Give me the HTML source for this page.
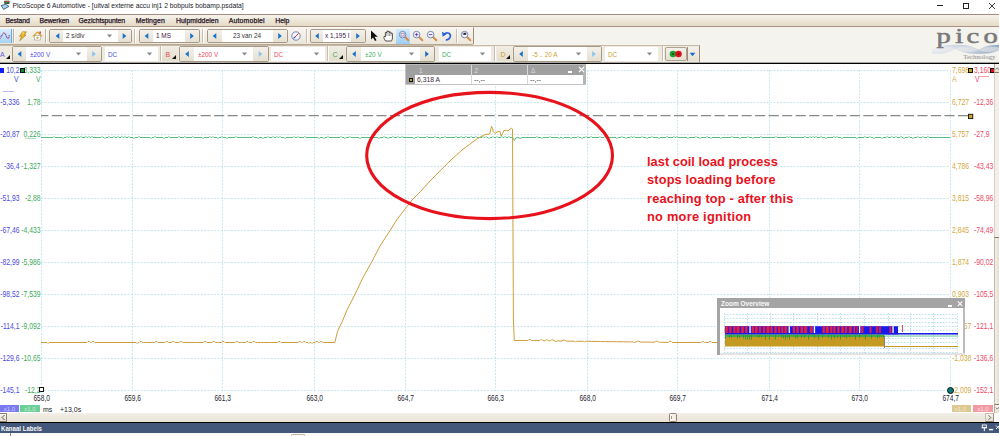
<!DOCTYPE html><html><head><meta charset="utf-8"><style>
html,body{margin:0;padding:0;}
body{width:999px;height:436px;overflow:hidden;position:relative;background:#f5f3ee;font-family:"Liberation Sans",sans-serif;}
.t{position:absolute;white-space:nowrap;line-height:1;font-family:"Liberation Sans",sans-serif;}
</style></head><body>
<div style="position:absolute;left:0px;top:0px;width:999px;height:14px;background:#fff"></div>
<svg style="position:absolute;left:0;top:0" width="12" height="12" viewBox="0 0 12 12">
<path d="M1.2 5.6 L5.8 4.2 L9 6.4 L3.6 9.4 Z" fill="#a6d2f4" stroke="#1a3458" stroke-width="0.7"/>
<rect x="4.4" y="0.8" width="5" height="3" fill="#1a1a1a"/><rect x="4.6" y="0.9" width="4.6" height="1.2" fill="#d83838"/><path d="M5 3.4 L6 2 L6.8 3.2 L7.6 1.2 L8.6 3.4" stroke="#20c040" stroke-width="0.7" fill="none"/><rect x="6.3" y="3.8" width="0.8" height="1" fill="#50c080"/>
</svg>
<div class="t" style="left:12.6px;top:2.59px;font-size:6.75px;color:#1a1a2a;font-weight:normal;">PicoScope 6 Automotive - [uitval externe accu inj1 2 bobpuls bobamp.psdata]</div>
<div style="position:absolute;left:937px;top:5px;width:6px;height:1px;background:#222"></div>
<div style="position:absolute;left:963px;top:3px;width:5px;height:5px;border:1px solid #222;box-sizing:border-box;width:6px;height:6px"></div>
<svg style="position:absolute;left:988px;top:2px" width="8" height="8" viewBox="0 0 8 8"><path d="M1 1L7 7M7 1L1 7" stroke="#222" stroke-width="0.9"/></svg>
<div style="position:absolute;left:0px;top:14px;width:999px;height:13px;background:linear-gradient(#f6f3ec 0%,#efe9dc 40%,#e5dac6 100%);border-top:1px solid #a48c80;border-bottom:1px solid #aa9484;box-sizing:border-box"></div>
<div class="t" style="left:5.4px;top:17.56px;font-size:6.9px;color:#1a0a1a;font-weight:normal;letter-spacing:-0.15px;-webkit-text-stroke:0.25px #2a1a2a;">Bestand</div>
<div class="t" style="left:39.6px;top:17.56px;font-size:6.9px;color:#1a0a1a;font-weight:normal;letter-spacing:-0.15px;-webkit-text-stroke:0.25px #2a1a2a;">Bewerken</div>
<div class="t" style="left:78.6px;top:17.56px;font-size:6.9px;color:#1a0a1a;font-weight:normal;letter-spacing:-0.1px;-webkit-text-stroke:0.25px #2a1a2a;">Gezichtspunten</div>
<div class="t" style="left:135.7px;top:17.56px;font-size:6.9px;color:#1a0a1a;font-weight:normal;letter-spacing:0.1px;-webkit-text-stroke:0.25px #2a1a2a;">Metingen</div>
<div class="t" style="left:175.9px;top:17.56px;font-size:6.9px;color:#1a0a1a;font-weight:normal;letter-spacing:0.05px;-webkit-text-stroke:0.25px #2a1a2a;">Hulpmiddelen</div>
<div class="t" style="left:228.8px;top:17.56px;font-size:6.9px;color:#1a0a1a;font-weight:normal;letter-spacing:0.15px;-webkit-text-stroke:0.25px #2a1a2a;">Automobiel</div>
<div class="t" style="left:275.2px;top:17.56px;font-size:6.9px;color:#1a0a1a;font-weight:normal;letter-spacing:0px;-webkit-text-stroke:0.25px #2a1a2a;">Help</div>
<div style="position:absolute;left:0px;top:27px;width:999px;height:36px;background:#f5f3ee"></div>
<div style="position:absolute;left:0px;top:27px;width:474px;height:18px;background:linear-gradient(#f7f5ef,#ebe6da);border-top:1px solid #faf8f3;border-bottom:1px solid #b8a894;border-right:1px solid #9c8c7c;box-sizing:border-box;border-bottom-right-radius:2px"></div>
<div style="position:absolute;left:0px;top:29px;width:12px;height:14px;background:linear-gradient(#dcefff,#a6d2f6);border-right:1px solid #62a8ea;box-sizing:border-box"></div>
<svg style="position:absolute;left:0;top:29px" width="12" height="14" viewBox="0 0 12 14"><path d="M0 9.5 C1.5 9.5,2.5 3.5,4 3.5 S6.5 9.5,8 9.5 S9 6,9.5 6" stroke="#e0303a" stroke-width="1" fill="none" stroke-dasharray="1 0.6"/><path d="M0 7.5 C1.5 7.5,2.7 4,4.5 4.5 S6.5 9.5,8 9 S8.8 7,9 6.5" stroke="#3a60e0" stroke-width="0.9" fill="none" stroke-dasharray="1 0.7"/></svg>
<div style="position:absolute;left:13px;top:29px;width:1px;height:14px;background:#bdb2a2"></div>
<div style="position:absolute;left:14px;top:29px;width:1px;height:14px;background:#fbfaf6"></div>
<svg style="position:absolute;left:18px;top:31px" width="10" height="11" viewBox="0 0 10 11"><path d="M4.5 0.8 L8.5 0.8 L6.2 4 L8 4 L1.8 9.8 L3.6 5.4 L1.5 5.4Z" fill="#e8b828" stroke="#9a6a08" stroke-width="0.5"/><path d="M4.2 2 L6 2" stroke="#fff6c0" stroke-width="0.8"/></svg>
<svg style="position:absolute;left:32px;top:31px" width="11" height="10" viewBox="0 0 11 10"><rect x="2.5" y="4.5" width="6" height="4.5" fill="#fff" stroke="#8a8a7a" stroke-width="0.5"/><path d="M0.8 5.4 L5.5 1 L10.2 5.4" stroke="#d8a020" stroke-width="1.2" fill="none"/><circle cx="5.5" cy="6.8" r="1.1" fill="#d8a020"/><rect x="7.5" y="0.5" width="1.2" height="2.2" fill="#b01818"/></svg>
<div style="position:absolute;left:45px;top:29px;width:1px;height:14px;background:#bdb2a2"></div>
<div style="position:absolute;left:46px;top:29px;width:1px;height:14px;background:#fbfaf6"></div>
<div style="position:absolute;left:49px;top:29px;width:83px;height:14px;border:1px solid #a89886;border-radius:2px;box-sizing:border-box;background:#ece7dc"></div>
<div style="position:absolute;left:50px;top:30px;width:13px;height:12px;background:linear-gradient(#f4f1ea,#e6e0d2);"></div>
<div style="position:absolute;left:63px;top:30px;width:55px;height:12px;background:#fff"></div>
<div class="t" style="left:66px;top:33.08px;font-size:6.4px;color:#333;font-weight:normal;transform:scaleY(1.2);transform-origin:50% 84.65%;">2 s/div</div>
<div style="position:absolute;left:118px;top:30px;width:13px;height:12px;background:linear-gradient(#f4f1ea,#e6e0d2);"></div>
<div style="position:absolute;left:134px;top:29px;width:1px;height:14px;background:#c9bdae"></div>
<div style="position:absolute;left:135px;top:29px;width:1px;height:14px;background:#fff"></div>
<div style="position:absolute;left:139px;top:29px;width:61px;height:14px;border:1px solid #a89886;border-radius:2px;box-sizing:border-box;background:#ece7dc"></div>
<div style="position:absolute;left:140px;top:30px;width:13px;height:12px;background:linear-gradient(#f4f1ea,#e6e0d2);"></div>
<div style="position:absolute;left:153px;top:30px;width:32px;height:12px;background:#fff"></div>
<div class="t" style="left:156px;top:33.08px;font-size:6.4px;color:#3a1a4a;font-weight:normal;transform:scaleY(1.2);transform-origin:50% 84.65%;">1 MS</div>
<div style="position:absolute;left:185px;top:30px;width:14px;height:12px;background:linear-gradient(#f4f1ea,#e6e0d2);"></div>
<div style="position:absolute;left:202px;top:29px;width:1px;height:14px;background:#c9bdae"></div>
<div style="position:absolute;left:203px;top:29px;width:1px;height:14px;background:#fff"></div>
<div style="position:absolute;left:207px;top:29px;width:81px;height:14px;border:1px solid #a89886;border-radius:2px;box-sizing:border-box;background:#ece7dc"></div>
<div style="position:absolute;left:208px;top:30px;width:14px;height:12px;background:linear-gradient(#f4f1ea,#e6e0d2);"></div>
<div style="position:absolute;left:222px;top:30px;width:51px;height:12px;background:#fff"></div>
<div class="t" style="right:738px;top:33.08px;font-size:6.4px;color:#333;font-weight:normal;transform:scaleY(1.2);transform-origin:50% 84.65%;">23 van 24</div>
<div style="position:absolute;left:273px;top:30px;width:14px;height:12px;background:linear-gradient(#f4f1ea,#e6e0d2);"></div>
<svg style="position:absolute;left:290px;top:29px" width="14" height="14" viewBox="0 0 14 14"><circle cx="6" cy="7" r="4.2" fill="#f4f6fa" stroke="#6a7aa8" stroke-width="0.9"/><path d="M3.8 9.2 L6.6 6.4 L8.4 4.6 L5.4 7.6Z" fill="#e03030" stroke="#e03030" stroke-width="0.9"/><path d="M3.6 9.4 L5.4 7.6" stroke="#4a60c8" stroke-width="1.1"/></svg>
<div style="position:absolute;left:306px;top:29px;width:1px;height:14px;background:#c9bdae"></div>
<div style="position:absolute;left:307px;top:29px;width:1px;height:14px;background:#fff"></div>
<div style="position:absolute;left:310px;top:29px;width:56px;height:14px;border:1px solid #a89886;border-radius:2px;box-sizing:border-box;background:#ece7dc"></div>
<div style="position:absolute;left:311px;top:30px;width:12px;height:12px;background:linear-gradient(#f4f1ea,#e6e0d2);"></div>
<div style="position:absolute;left:323px;top:30px;width:28px;height:12px;background:#fff"></div>
<div class="t" style="left:325px;top:33.08px;font-size:6.4px;color:#3a1a4a;font-weight:normal;transform:scaleY(1.2);transform-origin:50% 84.65%;">x 1,195 I</div>
<div style="position:absolute;left:351px;top:30px;width:14px;height:12px;background:linear-gradient(#f4f1ea,#e6e0d2);"></div>
<svg style="position:absolute;left:370px;top:30px" width="9" height="12" viewBox="0 0 9 12"><path d="M1 0.5 L1 9.5 L3 7.5 L5 11 L6.5 10.2 L4.6 6.8 L7.8 6.8Z" fill="#111"/></svg>
<svg style="position:absolute;left:383px;top:30px" width="11" height="12" viewBox="0 0 11 12"><path d="M2.5 11 C1 9,0.6 7.5,1.2 6.3 L2.4 6.8 L2.4 3 C2.4 2,3.7 2,3.7 3 L3.8 1.8 C3.8 0.8,5.1 0.8,5.1 1.8 L5.2 2 C5.2 1,6.5 1,6.5 2 L6.5 2.6 C6.5 1.7,7.8 1.7,7.8 2.6 L8.2 3.5 C8.3 2.8,9.4 2.8,9.4 3.6 L9.4 8 C9.4 9.6,8.4 11,8.4 11Z" fill="#fff" stroke="#1a1a1a" stroke-width="0.75"/><path d="M3.7 3v3M5.1 2v4M6.5 2.6v3.4M7.9 3v3" stroke="#444" stroke-width="0.45"/></svg>
<div style="position:absolute;left:396px;top:29px;width:14px;height:15px;background:linear-gradient(#d4ebfd,#9ccdf6)"></div>
<svg style="position:absolute;left:398px;top:30px" width="12" height="12" viewBox="0 0 12 12"><path d="M6.8 6.8 L10.3 10.3" stroke="#d88c48" stroke-width="2" stroke-linecap="round"/><circle cx="4.6" cy="4.6" r="3.3" fill="#eef3fb" stroke="#7a8cb0" stroke-width="1"/><rect x="3" y="3.2" width="3.2" height="2.8" fill="none" stroke="#8a70b0" stroke-width="0.7"/></svg>
<svg style="position:absolute;left:412px;top:30px" width="12" height="12" viewBox="0 0 12 12"><path d="M6.8 6.8 L10.3 10.3" stroke="#d88c48" stroke-width="2" stroke-linecap="round"/><circle cx="4.6" cy="4.6" r="3.3" fill="#eef3fb" stroke="#7a8cb0" stroke-width="1"/><path d="M2.9 4.6h3.4M4.6 2.9v3.4" stroke="#6a3ab0" stroke-width="0.9"/></svg>
<svg style="position:absolute;left:426px;top:30px" width="12" height="12" viewBox="0 0 12 12"><path d="M6.8 6.8 L10.3 10.3" stroke="#d88c48" stroke-width="2" stroke-linecap="round"/><circle cx="4.6" cy="4.6" r="3.3" fill="#eef3fb" stroke="#7a8cb0" stroke-width="1"/><path d="M2.9 4.6h3.4" stroke="#6a3ab0" stroke-width="0.9"/></svg>
<svg style="position:absolute;left:441px;top:30px" width="12" height="12" viewBox="0 0 12 12"><path d="M3.2 4.2 C5 2,9.6 2.6,9.4 6 C9.2 8.6,6.8 10,4.8 9.8" stroke="#2a62d8" stroke-width="1.7" fill="none"/><path d="M1 1.8 L1.6 6.8 L5.6 4.2Z" fill="#2a62d8"/></svg>
<div style="position:absolute;left:456px;top:29px;width:1px;height:14px;background:#c9bdae"></div>
<div style="position:absolute;left:457px;top:29px;width:1px;height:14px;background:#fff"></div>
<svg style="position:absolute;left:460px;top:30px" width="12" height="12" viewBox="0 0 12 12"><path d="M6.8 6.8 L10.3 10.3" stroke="#d88c48" stroke-width="2" stroke-linecap="round"/><circle cx="4.6" cy="4.6" r="3.3" fill="#eef3fb" stroke="#7a8cb0" stroke-width="1"/><rect x="3.6" y="2.8" width="2.6" height="2" fill="#223"/><rect x="2.6" y="3.4" width="1" height="1" fill="#223"/></svg>
<div style="position:absolute;left:0px;top:45px;width:700px;height:17px;background:#eeeadf;border-top:1px solid #c8baa8;border-right:1px solid #9c8c7c;box-sizing:border-box"></div>
<div class="t" style="left:0px;top:51.07px;font-size:7px;color:#5a5ae0;font-weight:normal;">A</div>
<div style="position:absolute;left:12px;top:46px;width:90px;height:16px;border:1px solid #a89886;border-radius:2px;box-sizing:border-box;background:#ece7dc"></div>
<div style="position:absolute;left:13px;top:47px;width:13px;height:14px;background:linear-gradient(#f4f1ea,#e6e0d2);"></div>
<div style="position:absolute;left:26px;top:47px;width:61px;height:14px;background:#fff"></div>
<div class="t" style="left:30px;top:51.58px;font-size:6.4px;color:#4a4ae8;font-weight:normal;transform:scaleY(1.2);transform-origin:50% 84.65%;">±200 V</div>
<div style="position:absolute;left:87px;top:47px;width:14px;height:14px;background:linear-gradient(#f4f1ea,#e6e0d2);"></div>
<div style="position:absolute;left:105px;top:47px;width:53px;height:14px;background:#fff"></div>
<div class="t" style="left:108px;top:51.58px;font-size:6.4px;color:#4a4ae8;font-weight:normal;transform:scaleY(1.2);transform-origin:50% 84.65%;">DC</div>
<div style="position:absolute;left:160px;top:46px;width:1px;height:15px;background:#c9bdae"></div>
<div style="position:absolute;left:161px;top:46px;width:1px;height:15px;background:#fff"></div>
<div style="position:absolute;left:162px;top:46px;width:16px;height:15px;background:linear-gradient(#f1ede3,#e4ddcd)"></div>
<div class="t" style="left:165.5px;top:51.07px;font-size:7px;color:#e84a4a;font-weight:normal;">B</div>
<div style="position:absolute;left:179px;top:46px;width:90px;height:16px;border:1px solid #a89886;border-radius:2px;box-sizing:border-box;background:#ece7dc"></div>
<div style="position:absolute;left:180px;top:47px;width:14px;height:14px;background:linear-gradient(#f4f1ea,#e6e0d2);"></div>
<div style="position:absolute;left:194px;top:47px;width:59px;height:14px;background:#fff"></div>
<div class="t" style="left:198px;top:51.58px;font-size:6.4px;color:#f04a5a;font-weight:normal;transform:scaleY(1.2);transform-origin:50% 84.65%;">±200 V</div>
<div style="position:absolute;left:253px;top:47px;width:15px;height:14px;background:linear-gradient(#f4f1ea,#e6e0d2);"></div>
<div style="position:absolute;left:271px;top:47px;width:54px;height:14px;background:#fff"></div>
<div class="t" style="left:274px;top:51.58px;font-size:6.4px;color:#f04a5a;font-weight:normal;transform:scaleY(1.2);transform-origin:50% 84.65%;">DC</div>
<div style="position:absolute;left:327px;top:46px;width:1px;height:15px;background:#c9bdae"></div>
<div style="position:absolute;left:328px;top:46px;width:1px;height:15px;background:#fff"></div>
<div style="position:absolute;left:329px;top:46px;width:16px;height:15px;background:linear-gradient(#f1ede3,#e4ddcd)"></div>
<div class="t" style="left:332.5px;top:51.07px;font-size:7px;color:#3cae5c;font-weight:normal;">C</div>
<div style="position:absolute;left:346px;top:46px;width:89px;height:16px;border:1px solid #a89886;border-radius:2px;box-sizing:border-box;background:#ece7dc"></div>
<div style="position:absolute;left:347px;top:47px;width:14px;height:14px;background:linear-gradient(#f4f1ea,#e6e0d2);"></div>
<div style="position:absolute;left:361px;top:47px;width:59px;height:14px;background:#fff"></div>
<div class="t" style="left:365px;top:51.58px;font-size:6.4px;color:#3cae5c;font-weight:normal;transform:scaleY(1.2);transform-origin:50% 84.65%;">±20 V</div>
<div style="position:absolute;left:420px;top:47px;width:14px;height:14px;background:linear-gradient(#f4f1ea,#e6e0d2);"></div>
<div style="position:absolute;left:439px;top:47px;width:52px;height:14px;background:#fff"></div>
<div class="t" style="left:442px;top:51.58px;font-size:6.4px;color:#3cae5c;font-weight:normal;transform:scaleY(1.2);transform-origin:50% 84.65%;">DC</div>
<div style="position:absolute;left:494px;top:46px;width:1px;height:15px;background:#c9bdae"></div>
<div style="position:absolute;left:495px;top:46px;width:1px;height:15px;background:#fff"></div>
<div style="position:absolute;left:497px;top:46px;width:15px;height:15px;background:linear-gradient(#f1ede3,#e4ddcd)"></div>
<div class="t" style="left:500.5px;top:51.07px;font-size:7px;color:#d0a030;font-weight:normal;">D</div>
<div style="position:absolute;left:513px;top:46px;width:89px;height:16px;border:1px solid #a89886;border-radius:2px;box-sizing:border-box;background:#ece7dc"></div>
<div style="position:absolute;left:514px;top:47px;width:14px;height:14px;background:linear-gradient(#f4f1ea,#e6e0d2);"></div>
<div style="position:absolute;left:528px;top:47px;width:59px;height:14px;background:#fff"></div>
<div class="t" style="left:532px;top:51.58px;font-size:6.4px;color:#d0a030;font-weight:normal;transform:scaleY(1.2);transform-origin:50% 84.65%;">-5 .. 20 A</div>
<div style="position:absolute;left:587px;top:47px;width:14px;height:14px;background:linear-gradient(#f4f1ea,#e6e0d2);"></div>
<div style="position:absolute;left:605px;top:47px;width:53px;height:14px;background:#fff"></div>
<div class="t" style="left:608px;top:51.58px;font-size:6.4px;color:#d0a030;font-weight:normal;transform:scaleY(1.2);transform-origin:50% 84.65%;">DC</div>
<div style="position:absolute;left:662px;top:46px;width:1px;height:15px;background:#c9bdae"></div>
<div style="position:absolute;left:663px;top:46px;width:1px;height:15px;background:#fff"></div>
<div style="position:absolute;left:665px;top:47px;width:22px;height:14px;background:linear-gradient(#f4f1ea,#e6e0d2);border:1px solid #b0a290;border-radius:2px;box-sizing:border-box"></div>
<svg style="position:absolute;left:665px;top:47px" width="22" height="14" viewBox="0 0 22 14"><circle cx="8" cy="7" r="3.3" fill="#1aa030"/><circle cx="13.5" cy="7" r="3.3" fill="#e0101a"/><circle cx="8" cy="7" r="0.8" fill="#111"/><circle cx="13.5" cy="7" r="0.8" fill="#111"/></svg>
<div style="position:absolute;left:687px;top:47px;width:11px;height:14px;background:linear-gradient(#f4f1ea,#e6e0d2);border-left:1px solid #9a8a78;box-sizing:border-box"></div>
<svg style="position:absolute;left:0;top:0" width="999" height="70" viewBox="0 0 999 70"><path d="M59.3 33.0 L55.7 36.0 L59.3 39.0Z" fill="#1a73c9"/><path d="M106.9 34.4 L112.1 34.4 L109.5 37.6Z" fill="#8a8a8a"/><path d="M122.7 33.0 L126.3 36.0 L122.7 39.0Z" fill="#1a73c9"/><path d="M148.3 33.0 L144.7 36.0 L148.3 39.0Z" fill="#1a73c9"/><path d="M190.2 33.0 L193.8 36.0 L190.2 39.0Z" fill="#1a73c9"/><path d="M216.3 33.0 L212.7 36.0 L216.3 39.0Z" fill="#1a73c9"/><path d="M278.2 33.0 L281.8 36.0 L278.2 39.0Z" fill="#1a73c9"/><path d="M318.8 33.0 L315.2 36.0 L318.8 39.0Z" fill="#1a73c9"/><path d="M356.2 33.0 L359.8 36.0 L356.2 39.0Z" fill="#1a73c9"/><path d="M10 55 L10 59 L6 59Z" fill="#111"/><path d="M21.3 51.0 L17.7 54.0 L21.3 57.0Z" fill="#1a73c9"/><path d="M75.9 52.4 L81.1 52.4 L78.5 55.6Z" fill="#8a8a8a"/><path d="M92.2 51.0 L95.8 54.0 L92.2 57.0Z" fill="#8cc4ee"/><path d="M146.9 52.4 L152.1 52.4 L149.5 55.6Z" fill="#8a8a8a"/><path d="M176 55 L176 59 L172 59Z" fill="#111"/><path d="M188.8 51.0 L185.2 54.0 L188.8 57.0Z" fill="#1a73c9"/><path d="M241.9 52.4 L247.1 52.4 L244.5 55.6Z" fill="#8a8a8a"/><path d="M258.7 51.0 L262.3 54.0 L258.7 57.0Z" fill="#8cc4ee"/><path d="M313.9 52.4 L319.1 52.4 L316.5 55.6Z" fill="#8a8a8a"/><path d="M343 55 L343 59 L339 59Z" fill="#111"/><path d="M355.8 51.0 L352.2 54.0 L355.8 57.0Z" fill="#1a73c9"/><path d="M408.9 52.4 L414.1 52.4 L411.5 55.6Z" fill="#8a8a8a"/><path d="M425.2 51.0 L428.8 54.0 L425.2 57.0Z" fill="#1a6ac8"/><path d="M479.9 52.4 L485.1 52.4 L482.5 55.6Z" fill="#8a8a8a"/><path d="M510 55 L510 59 L506 59Z" fill="#111"/><path d="M522.8 51.0 L519.2 54.0 L522.8 57.0Z" fill="#1a73c9"/><path d="M575.9 52.4 L581.1 52.4 L578.5 55.6Z" fill="#8a8a8a"/><path d="M592.2 51.0 L595.8 54.0 L592.2 57.0Z" fill="#8cc4ee"/><path d="M646.9 52.4 L652.1 52.4 L649.5 55.6Z" fill="#8a8a8a"/><path d="M689.7 52.8 L695.3 52.8 L692.5 56.2Z" fill="#1a6ad0"/></svg>
<svg style="position:absolute;left:930px;top:25px" width="69" height="37" viewBox="0 0 69 37"><defs><linearGradient id="wg" x1="0" x2="1" y1="0" y2="0"><stop offset="0" stop-color="#dde6f0"/><stop offset="0.5" stop-color="#b8c8dc"/><stop offset="1" stop-color="#7890b4"/></linearGradient></defs><g stroke="url(#wg)" stroke-width="0.45" fill="none"><polyline points="2.0,25.30 3.0,24.83 4.0,24.35 5.0,23.87 6.0,23.40 7.0,22.94 8.0,22.51 9.0,22.11 10.0,21.76 11.0,21.45 12.0,21.19 13.0,20.99 14.0,20.86 15.0,20.79 16.0,20.78 17.0,20.84 18.0,20.96 19.0,21.15 20.0,21.39 21.0,21.69 22.0,22.04 23.0,22.43 24.0,22.85 25.0,23.30 26.0,23.77 27.0,24.25 28.0,24.73 29.0,25.20 30.0,25.66 31.0,26.09 32.0,26.49 33.0,26.84 34.0,27.15 35.0,27.41 36.0,27.61 37.0,27.74 38.0,27.81 39.0,27.82 40.0,27.76 41.0,27.64 42.0,27.45 43.0,27.21 44.0,26.91 45.0,26.56 46.0,26.17 47.0,25.75 48.0,25.30 49.0,24.83 50.0,24.35 51.0,23.87 52.0,23.40 53.0,22.94 54.0,22.51 55.0,22.11 56.0,21.76 57.0,21.45 58.0,21.19 59.0,20.99 60.0,20.86 61.0,20.79 62.0,20.78 63.0,20.84 64.0,20.96 65.0,21.15 66.0,21.39 67.0,21.69 68.0,22.04 69.0,22.43 70.0,22.85 71.0,23.30"/><polyline points="2.0,26.34 3.0,25.90 4.0,25.44 5.0,24.95 6.0,24.45 7.0,23.95 8.0,23.45 9.0,22.98 10.0,22.52 11.0,22.10 12.0,21.72 13.0,21.39 14.0,21.11 15.0,20.89 16.0,20.74 17.0,20.65 18.0,20.63 19.0,20.67 20.0,20.79 21.0,20.97 22.0,21.21 23.0,21.51 24.0,21.87 25.0,22.26 26.0,22.70 27.0,23.16 28.0,23.65 29.0,24.15 30.0,24.65 31.0,25.15 32.0,25.62 33.0,26.08 34.0,26.50 35.0,26.88 36.0,27.21 37.0,27.49 38.0,27.71 39.0,27.86 40.0,27.95 41.0,27.97 42.0,27.93 43.0,27.81 44.0,27.63 45.0,27.39 46.0,27.09 47.0,26.73 48.0,26.34 49.0,25.90 50.0,25.44 51.0,24.95 52.0,24.45 53.0,23.95 54.0,23.45 55.0,22.98 56.0,22.52 57.0,22.10 58.0,21.72 59.0,21.39 60.0,21.11 61.0,20.89 62.0,20.74 63.0,20.65 64.0,20.63 65.0,20.67 66.0,20.79 67.0,20.97 68.0,21.21 69.0,21.51 70.0,21.87 71.0,22.26"/><polyline points="2.0,27.27 3.0,26.91 4.0,26.51 5.0,26.06 6.0,25.58 7.0,25.08 8.0,24.56 9.0,24.04 10.0,23.52 11.0,23.02 12.0,22.54 13.0,22.09 14.0,21.69 15.0,21.33 16.0,21.03 17.0,20.79 18.0,20.62 19.0,20.51 20.0,20.47 21.0,20.51 22.0,20.62 23.0,20.79 24.0,21.03 25.0,21.33 26.0,21.69 27.0,22.09 28.0,22.54 29.0,23.02 30.0,23.52 31.0,24.04 32.0,24.56 33.0,25.08 34.0,25.58 35.0,26.06 36.0,26.51 37.0,26.91 38.0,27.27 39.0,27.57 40.0,27.81 41.0,27.98 42.0,28.09 43.0,28.12 44.0,28.09 45.0,27.98 46.0,27.81 47.0,27.57 48.0,27.27 49.0,26.91 50.0,26.51 51.0,26.06 52.0,25.58 53.0,25.08 54.0,24.56 55.0,24.04 56.0,23.52 57.0,23.02 58.0,22.54 59.0,22.09 60.0,21.69 61.0,21.33 62.0,21.03 63.0,20.79 64.0,20.62 65.0,20.51 66.0,20.47 67.0,20.51 68.0,20.62 69.0,20.79 70.0,21.03 71.0,21.33"/><polyline points="2.0,27.99 3.0,27.75 4.0,27.45 5.0,27.09 6.0,26.68 7.0,26.22 8.0,25.73 9.0,25.21 10.0,24.68 11.0,24.14 12.0,23.60 13.0,23.07 14.0,22.57 15.0,22.10 16.0,21.67 17.0,21.29 18.0,20.96 19.0,20.70 20.0,20.50 21.0,20.38 22.0,20.33 23.0,20.35 24.0,20.44 25.0,20.61 26.0,20.85 27.0,21.15 28.0,21.51 29.0,21.92 30.0,22.38 31.0,22.87 32.0,23.39 33.0,23.92 34.0,24.46 35.0,25.00 36.0,25.53 37.0,26.03 38.0,26.50 39.0,26.93 40.0,27.31 41.0,27.64 42.0,27.90 43.0,28.10 44.0,28.22 45.0,28.27 46.0,28.25 47.0,28.16 48.0,27.99 49.0,27.75 50.0,27.45 51.0,27.09 52.0,26.68 53.0,26.22 54.0,25.73 55.0,25.21 56.0,24.68 57.0,24.14 58.0,23.60 59.0,23.07 60.0,22.57 61.0,22.10 62.0,21.67 63.0,21.29 64.0,20.96 65.0,20.70 66.0,20.50 67.0,20.38 68.0,20.33 69.0,20.35 70.0,20.44 71.0,20.61"/><polyline points="2.0,28.41 3.0,28.33 4.0,28.17 5.0,27.94 6.0,27.64 7.0,27.28 8.0,26.86 9.0,26.39 10.0,25.89 11.0,25.36 12.0,24.81 13.0,24.24 14.0,23.68 15.0,23.13 16.0,22.61 17.0,22.11 18.0,21.65 19.0,21.25 20.0,20.90 21.0,20.61 22.0,20.39 23.0,20.25 24.0,20.18 25.0,20.19 26.0,20.27 27.0,20.43 28.0,20.66 29.0,20.96 30.0,21.32 31.0,21.74 32.0,22.21 33.0,22.71 34.0,23.24 35.0,23.79 36.0,24.36 37.0,24.92 38.0,25.47 39.0,25.99 40.0,26.49 41.0,26.95 42.0,27.35 43.0,27.70 44.0,27.99 45.0,28.21 46.0,28.35 47.0,28.42 48.0,28.41 49.0,28.33 50.0,28.17 51.0,27.94 52.0,27.64 53.0,27.28 54.0,26.86 55.0,26.39 56.0,25.89 57.0,25.36 58.0,24.81 59.0,24.24 60.0,23.68 61.0,23.13 62.0,22.61 63.0,22.11 64.0,21.65 65.0,21.25 66.0,20.90 67.0,20.61 68.0,20.39 69.0,20.25 70.0,20.18 71.0,20.19"/><polyline points="2.0,28.33 3.0,28.41 4.0,28.42 5.0,28.35 6.0,28.21 7.0,27.99 8.0,27.70 9.0,27.35 10.0,26.95 11.0,26.49 12.0,25.99 13.0,25.47 14.0,24.92 15.0,24.36 16.0,23.79 17.0,23.24 18.0,22.71 19.0,22.21 20.0,21.74 21.0,21.32 22.0,20.96 23.0,20.66 24.0,20.43 25.0,20.27 26.0,20.19 27.0,20.18 28.0,20.25 29.0,20.39 30.0,20.61 31.0,20.90 32.0,21.25 33.0,21.65 34.0,22.11 35.0,22.61 36.0,23.13 37.0,23.68 38.0,24.24 39.0,24.81 40.0,25.36 41.0,25.89 42.0,26.39 43.0,26.86 44.0,27.28 45.0,27.64 46.0,27.94 47.0,28.17 48.0,28.33 49.0,28.41 50.0,28.42 51.0,28.35 52.0,28.21 53.0,27.99 54.0,27.70 55.0,27.35 56.0,26.95 57.0,26.49 58.0,25.99 59.0,25.47 60.0,24.92 61.0,24.36 62.0,23.79 63.0,23.24 64.0,22.71 65.0,22.21 66.0,21.74 67.0,21.32 68.0,20.96 69.0,20.66 70.0,20.43 71.0,20.27"/><polyline points="2.0,27.75 3.0,27.99 4.0,28.16 5.0,28.25 6.0,28.27 7.0,28.22 8.0,28.10 9.0,27.90 10.0,27.64 11.0,27.31 12.0,26.93 13.0,26.50 14.0,26.03 15.0,25.53 16.0,25.00 17.0,24.46 18.0,23.92 19.0,23.39 20.0,22.87 21.0,22.38 22.0,21.92 23.0,21.51 24.0,21.15 25.0,20.85 26.0,20.61 27.0,20.44 28.0,20.35 29.0,20.33 30.0,20.38 31.0,20.50 32.0,20.70 33.0,20.96 34.0,21.29 35.0,21.67 36.0,22.10 37.0,22.57 38.0,23.07 39.0,23.60 40.0,24.14 41.0,24.68 42.0,25.21 43.0,25.73 44.0,26.22 45.0,26.68 46.0,27.09 47.0,27.45 48.0,27.75 49.0,27.99 50.0,28.16 51.0,28.25 52.0,28.27 53.0,28.22 54.0,28.10 55.0,27.90 56.0,27.64 57.0,27.31 58.0,26.93 59.0,26.50 60.0,26.03 61.0,25.53 62.0,25.00 63.0,24.46 64.0,23.92 65.0,23.39 66.0,22.87 67.0,22.38 68.0,21.92 69.0,21.51 70.0,21.15 71.0,20.85"/><polyline points="2.0,26.91 3.0,27.27 4.0,27.57 5.0,27.81 6.0,27.98 7.0,28.09 8.0,28.12 9.0,28.09 10.0,27.98 11.0,27.81 12.0,27.57 13.0,27.27 14.0,26.91 15.0,26.51 16.0,26.06 17.0,25.58 18.0,25.08 19.0,24.56 20.0,24.04 21.0,23.52 22.0,23.02 23.0,22.54 24.0,22.09 25.0,21.69 26.0,21.33 27.0,21.03 28.0,20.79 29.0,20.62 30.0,20.51 31.0,20.47 32.0,20.51 33.0,20.62 34.0,20.79 35.0,21.03 36.0,21.33 37.0,21.69 38.0,22.09 39.0,22.54 40.0,23.02 41.0,23.52 42.0,24.04 43.0,24.56 44.0,25.08 45.0,25.58 46.0,26.06 47.0,26.51 48.0,26.91 49.0,27.27 50.0,27.57 51.0,27.81 52.0,27.98 53.0,28.09 54.0,28.12 55.0,28.09 56.0,27.98 57.0,27.81 58.0,27.57 59.0,27.27 60.0,26.91 61.0,26.51 62.0,26.06 63.0,25.58 64.0,25.08 65.0,24.56 66.0,24.04 67.0,23.52 68.0,23.02 69.0,22.54 70.0,22.09 71.0,21.69"/><polyline points="2.0,25.90 3.0,26.34 4.0,26.73 5.0,27.09 6.0,27.39 7.0,27.63 8.0,27.81 9.0,27.93 10.0,27.97 11.0,27.95 12.0,27.86 13.0,27.71 14.0,27.49 15.0,27.21 16.0,26.88 17.0,26.50 18.0,26.08 19.0,25.62 20.0,25.15 21.0,24.65 22.0,24.15 23.0,23.65 24.0,23.16 25.0,22.70 26.0,22.26 27.0,21.87 28.0,21.51 29.0,21.21 30.0,20.97 31.0,20.79 32.0,20.67 33.0,20.63 34.0,20.65 35.0,20.74 36.0,20.89 37.0,21.11 38.0,21.39 39.0,21.72 40.0,22.10 41.0,22.52 42.0,22.98 43.0,23.45 44.0,23.95 45.0,24.45 46.0,24.95 47.0,25.44 48.0,25.90 49.0,26.34 50.0,26.73 51.0,27.09 52.0,27.39 53.0,27.63 54.0,27.81 55.0,27.93 56.0,27.97 57.0,27.95 58.0,27.86 59.0,27.71 60.0,27.49 61.0,27.21 62.0,26.88 63.0,26.50 64.0,26.08 65.0,25.62 66.0,25.15 67.0,24.65 68.0,24.15 69.0,23.65 70.0,23.16 71.0,22.70"/><polyline points="2.0,24.83 3.0,25.30 4.0,25.75 5.0,26.17 6.0,26.56 7.0,26.91 8.0,27.21 9.0,27.45 10.0,27.64 11.0,27.76 12.0,27.82 13.0,27.81 14.0,27.74 15.0,27.61 16.0,27.41 17.0,27.15 18.0,26.84 19.0,26.49 20.0,26.09 21.0,25.66 22.0,25.20 23.0,24.73 24.0,24.25 25.0,23.77 26.0,23.30 27.0,22.85 28.0,22.43 29.0,22.04 30.0,21.69 31.0,21.39 32.0,21.15 33.0,20.96 34.0,20.84 35.0,20.78 36.0,20.79 37.0,20.86 38.0,20.99 39.0,21.19 40.0,21.45 41.0,21.76 42.0,22.11 43.0,22.51 44.0,22.94 45.0,23.40 46.0,23.87 47.0,24.35 48.0,24.83 49.0,25.30 50.0,25.75 51.0,26.17 52.0,26.56 53.0,26.91 54.0,27.21 55.0,27.45 56.0,27.64 57.0,27.76 58.0,27.82 59.0,27.81 60.0,27.74 61.0,27.61 62.0,27.41 63.0,27.15 64.0,26.84 65.0,26.49 66.0,26.09 67.0,25.66 68.0,25.20 69.0,24.73 70.0,24.25 71.0,23.77"/></g><g transform="scale(1.33,1)"><text font-family="Liberation Serif" font-size="21.5" fill="#7a7a7a" stroke="#7a7a7a" stroke-width="0.55"><tspan x="4.8" y="18.3">p</tspan><tspan x="19" y="18.3">i</tspan><tspan x="27.4" y="18.3">c</tspan><tspan x="40.3" y="18.3">o</tspan></text></g><g transform="scale(1.12,1)"><text x="29.8" y="34" font-family="Liberation Serif" font-size="6.1" fill="#8a8a8a">Technology</text></g></svg>
<div style="position:absolute;left:0px;top:62px;width:999px;height:1px;background:#a8a6a2"></div>
<div style="position:absolute;left:0px;top:63px;width:999px;height:1px;background:#000"></div>
<div style="position:absolute;left:0px;top:64px;width:999px;height:349px;background:#fff"></div>
<svg style="position:absolute;left:0;top:0" width="999" height="436" viewBox="0 0 999 436"><g stroke="#c6e5f1" stroke-width="1" stroke-dasharray="1.9 1.43" fill="none"><path d="M41 70.5 H950"/><path d="M41 102.5 H950"/><path d="M41 134.5 H950"/><path d="M41 166.5 H950"/><path d="M41 198.5 H950"/><path d="M41 230.5 H950"/><path d="M41 262.5 H950"/><path d="M41 294.5 H950"/><path d="M41 326.5 H950"/><path d="M41 358.5 H950"/><path d="M41 390.5 H950"/><path d="M41.5 70 V391"/><path d="M132.5 70 V391"/><path d="M222.5 70 V391"/><path d="M314.5 70 V391"/><path d="M405.5 70 V391"/><path d="M495.5 70 V391"/><path d="M587.5 70 V391"/><path d="M677.5 70 V391"/><path d="M769.5 70 V391"/><path d="M859.5 70 V391"/><path d="M950.5 70 V391"/></g><polyline points="41.0,137.5 45.0,137.5 47.0,137.5 50.0,137.5 53.0,137.5 54.0,136.5 55.0,137.5 57.0,137.5 62.0,137.5 63.0,138.6 64.0,137.5 66.0,137.5 67.0,136.5 68.0,137.5 69.0,137.5 70.0,136.5 71.0,137.5 72.0,137.5 77.0,137.5 78.0,136.5 79.0,137.5 80.0,137.5 81.0,136.5 82.0,137.5 85.0,137.5 86.0,136.5 87.0,137.5 88.0,137.5 89.0,136.5 90.0,137.5 91.0,137.5 92.0,136.5 93.0,137.5 94.0,137.5 97.0,137.5 101.0,137.5 102.0,136.5 103.0,137.5 104.0,137.5 105.0,138.6 106.0,137.5 108.0,137.5 109.0,136.5 110.0,137.5 113.0,137.5 114.0,136.5 115.0,137.5 117.0,137.5 118.0,136.5 119.0,137.5 121.0,137.5 122.0,136.5 123.0,137.5 124.0,137.5 125.0,136.5 126.0,137.5 128.0,137.5 129.0,136.5 130.0,137.5 133.0,137.5 134.0,138.6 135.0,137.5 138.0,137.5 139.0,136.5 140.0,137.5 142.0,137.5 147.0,137.5 150.0,137.5 151.0,138.6 152.0,137.5 154.0,137.5 155.0,136.5 156.0,137.5 157.0,137.5 161.0,137.5 163.0,137.5 164.0,138.6 165.0,137.5 168.0,137.5 169.0,136.5 170.0,137.5 173.0,137.5 178.0,137.5 179.0,136.5 180.0,137.5 181.0,137.5 184.0,137.5 185.0,136.5 186.0,137.5 187.0,137.5 192.0,137.5 193.0,136.5 194.0,137.5 196.0,137.5 200.0,137.5 202.0,137.5 203.0,138.6 204.0,137.5 207.0,137.5 209.0,137.5 210.0,136.5 211.0,137.5 212.0,137.5 213.0,136.5 214.0,137.5 217.0,137.5 218.0,138.6 219.0,137.5 221.0,137.5 222.0,136.5 223.0,137.5 226.0,137.5 227.0,138.6 228.0,137.5 231.0,137.5 235.0,137.5 236.0,136.5 237.0,137.5 238.0,137.5 242.0,137.5 245.0,137.5 247.0,137.5 252.0,137.5 253.0,136.5 254.0,137.5 257.0,137.5 258.0,138.6 259.0,137.5 262.0,137.5 263.0,138.6 264.0,137.5 267.0,137.5 268.0,136.5 269.0,137.5 272.0,137.5 273.0,136.5 274.0,137.5 276.0,137.5 277.0,136.5 278.0,137.5 279.0,137.5 280.0,136.5 281.0,137.5 284.0,137.5 285.0,138.6 286.0,137.5 288.0,137.5 293.0,137.5 294.0,136.5 295.0,137.5 297.0,137.5 298.0,136.5 299.0,137.5 300.0,137.5 304.0,137.5 305.0,136.5 306.0,137.5 309.0,137.5 314.0,137.5 318.0,137.5 319.0,138.6 320.0,137.5 323.0,137.5 324.0,138.6 325.0,137.5 327.0,137.5 328.0,136.5 329.0,137.5 332.0,137.5 337.0,137.5 340.0,137.5 341.0,136.5 342.0,137.5 344.0,137.5 345.0,138.6 346.0,137.5 349.0,137.5 350.0,136.5 351.0,137.5 353.0,137.5 355.0,137.5 359.0,137.5 360.0,138.6 361.0,137.5 364.0,137.5 368.0,137.5 372.0,137.5 376.0,137.5 378.0,137.5 379.0,138.6 380.0,137.5 383.0,137.5 384.0,136.5 385.0,137.5 387.0,137.5 388.0,138.6 389.0,137.5 392.0,137.5 393.0,136.5 394.0,137.5 397.0,137.5 398.0,136.5 399.0,137.5 401.0,137.5 402.0,136.5 403.0,137.5 404.0,137.5 409.0,137.5 413.0,137.5 414.0,138.6 415.0,137.5 417.0,137.5 418.0,136.5 419.0,137.5 421.0,137.5 426.0,137.5 427.0,136.5 428.0,137.5 429.0,137.5 434.0,137.5 435.0,136.5 436.0,137.5 439.0,137.5 440.0,138.6 441.0,137.5 444.0,137.5 445.0,136.5 446.0,137.5 449.0,137.5 453.0,137.5 455.0,137.5 456.0,136.5 457.0,137.5 460.0,137.5 461.0,136.5 462.0,137.5 465.0,137.5 466.0,136.5 467.0,137.5 470.0,137.5 471.0,136.5 472.0,137.5 475.0,137.5 476.0,136.5 477.0,137.5 479.0,137.5 482.0,137.5 483.0,136.5 484.0,137.5 485.0,137.5 486.0,136.5 487.0,137.5 488.0,137.5 489.0,138.6 490.0,137.5 492.0,137.5 493.0,136.5 494.0,137.5 496.0,137.5 497.0,136.5 498.0,137.5 501.0,137.5 502.0,136.5 503.0,137.5 504.0,137.5 505.0,136.5 506.0,137.5 508.0,137.5 509.0,136.5 510.0,137.5 512.5,137.5 514.3,140.5 516,137.8 518,137.5 520.5,138.5 522,137.5 523.0,137.5 528.0,137.5 532.0,137.5 536.0,137.5 537.0,136.5 538.0,137.5 541.0,137.5 542.0,138.6 543.0,137.5 546.0,137.5 549.0,137.5 550.0,136.5 551.0,137.5 554.0,137.5 558.0,137.5 559.0,138.6 560.0,137.5 562.0,137.5 563.0,138.6 564.0,137.5 567.0,137.5 570.0,137.5 571.0,138.6 572.0,137.5 575.0,137.5 577.0,137.5 578.0,136.5 579.0,137.5 581.0,137.5 582.0,138.6 583.0,137.5 585.0,137.5 586.0,136.5 587.0,137.5 590.0,137.5 591.0,136.5 592.0,137.5 594.0,137.5 599.0,137.5 600.0,136.5 601.0,137.5 604.0,137.5 605.0,136.5 606.0,137.5 607.0,137.5 608.0,138.6 609.0,137.5 612.0,137.5 616.0,137.5 617.0,138.6 618.0,137.5 621.0,137.5 622.0,136.5 623.0,137.5 625.0,137.5 626.0,138.6 627.0,137.5 630.0,137.5 631.0,136.5 632.0,137.5 633.0,137.5 634.0,136.5 635.0,137.5 638.0,137.5 641.0,137.5 642.0,136.5 643.0,137.5 644.0,137.5 646.0,137.5 647.0,138.6 648.0,137.5 651.0,137.5 652.0,136.5 653.0,137.5 655.0,137.5 658.0,137.5 659.0,138.6 660.0,137.5 662.0,137.5 666.0,137.5 667.0,136.5 668.0,137.5 671.0,137.5 673.0,137.5 674.0,136.5 675.0,137.5 676.0,137.5 677.0,136.5 678.0,137.5 681.0,137.5 685.0,137.5 687.0,137.5 688.0,138.6 689.0,137.5 692.0,137.5 695.0,137.5 696.0,136.5 697.0,137.5 699.0,137.5 700.0,138.6 701.0,137.5 703.0,137.5 706.0,137.5 707.0,136.5 708.0,137.5 710.0,137.5 711.0,138.6 712.0,137.5 715.0,137.5 720.0,137.5 721.0,138.6 722.0,137.5 724.0,137.5 729.0,137.5 731.0,137.5 732.0,136.5 733.0,137.5 734.0,137.5 739.0,137.5 740.0,138.6 741.0,137.5 744.0,137.5 747.0,137.5 748.0,136.5 749.0,137.5 752.0,137.5 753.0,138.6 754.0,137.5 757.0,137.5 760.0,137.5 761.0,136.5 762.0,137.5 765.0,137.5 767.0,137.5 771.0,137.5 773.0,137.5 775.0,137.5 776.0,136.5 777.0,137.5 779.0,137.5 784.0,137.5 786.0,137.5 787.0,136.5 788.0,137.5 789.0,137.5 790.0,136.5 791.0,137.5 794.0,137.5 796.0,137.5 799.0,137.5 804.0,137.5 805.0,136.5 806.0,137.5 809.0,137.5 810.0,136.5 811.0,137.5 812.0,137.5 813.0,136.5 814.0,137.5 815.0,137.5 816.0,136.5 817.0,137.5 818.0,137.5 820.0,137.5 821.0,136.5 822.0,137.5 825.0,137.5 826.0,138.6 827.0,137.5 830.0,137.5 833.0,137.5 834.0,136.5 835.0,137.5 836.0,137.5 837.0,136.5 838.0,137.5 841.0,137.5 842.0,138.6 843.0,137.5 846.0,137.5 850.0,137.5 853.0,137.5 856.0,137.5 857.0,138.6 858.0,137.5 861.0,137.5 864.0,137.5 865.0,136.5 866.0,137.5 869.0,137.5 870.0,136.5 871.0,137.5 873.0,137.5 874.0,138.6 875.0,137.5 877.0,137.5 881.0,137.5 882.0,138.6 883.0,137.5 886.0,137.5 887.0,136.5 888.0,137.5 891.0,137.5 892.0,136.5 893.0,137.5 895.0,137.5 896.0,136.5 897.0,137.5 900.0,137.5 901.0,136.5 902.0,137.5 903.0,137.5 904.0,138.6 905.0,137.5 908.0,137.5 909.0,136.5 910.0,137.5 912.0,137.5 913.0,138.6 914.0,137.5 917.0,137.5 918.0,136.5 919.0,137.5 922.0,137.5 923.0,136.5 924.0,137.5 927.0,137.5 928.0,136.5 929.0,137.5 930.0,137.5 935.0,137.5 938.0,137.5 940.0,137.5 945.0,137.5 948.0,137.5 950,137.5" fill="none" stroke="#44b472" stroke-width="0.9"/><path d="M41 115.6 H968" stroke="#888" stroke-width="1.05" stroke-dasharray="10.1 3.425" stroke-dashoffset="2.725"/><rect x="968.5" y="114.3" width="4.3" height="4.3" fill="#d0a428" stroke="#111" stroke-width="0.9"/><polyline points="41.0,342.5 47.0,342.5 48.0,343.5 49.0,342.5 50.0,342.5 53.0,342.5 61.0,342.5 64.0,342.5 67.0,342.5 71.0,342.5 79.0,342.5 87.0,342.5 88.0,341.5 89.5,341.5 90.5,342.5 91.5,342.5 92.5,341.5 94.0,341.5 95.0,342.5 96.0,342.5 99.0,342.5 107.0,342.5 110.0,342.5 114.0,342.5 122.0,342.5 128.0,342.5 136.0,342.5 137.0,343.5 138.0,342.5 139.0,342.5 140.0,341.5 141.5,341.5 142.5,342.5 143.5,342.5 146.5,342.5 154.5,342.5 155.5,341.5 157.0,341.5 158.0,342.5 159.0,342.5 162.0,342.5 165.0,342.5 166.0,341.5 167.5,341.5 168.5,342.5 171.5,342.5 172.5,341.5 174.0,341.5 175.0,342.5 176.0,342.5 179.0,342.5 180.0,341.5 181.5,341.5 182.5,342.5 183.5,342.5 191.5,342.5 195.5,342.5 203.5,342.5 204.5,341.5 206.0,341.5 207.0,342.5 208.0,342.5 212.0,342.5 213.0,341.5 214.5,341.5 215.5,342.5 218.5,342.5 221.5,342.5 222.5,341.5 224.0,341.5 225.0,342.5 228.0,342.5 232.0,342.5 235.0,342.5 236.0,341.5 237.5,341.5 238.5,342.5 241.5,342.5 245.5,342.5 246.5,341.5 248.0,341.5 249.0,342.5 252.0,342.5 253.0,341.5 254.5,341.5 255.5,342.5 257.5,342.5 260.5,342.5 263.5,342.5 269.5,342.5 277.5,342.5 278.5,341.5 280.0,341.5 281.0,342.5 284.0,342.5 292.0,342.5 298.0,342.5 299.0,341.5 300.5,341.5 301.5,342.5 302.5,342.5 303.5,341.5 305.0,341.5 306.0,342.5 308.0,342.5 309.0,343.5 310.0,342.5 311.0,342.5 312.0,343.5 313.0,342.5 315.0,342.5 316.0,341.5 317.5,341.5 318.5,342.5 319.5,342.5 320.5,341.5 322.0,341.5 323.0,342.5 326.0,342.5 334.8,342.5 337.5,331.5 340.0,326.0 342.5,321.0 347.0,310.0 355.0,294.3 363.0,277.5 371.6,262.2 380.0,246.0 390.0,230.6 397.0,219.5 405.2,208.8 412.0,200.0 420.7,191.3 430.0,181.0 441.3,169.6 451.0,160.0 462.0,150.0 470.0,144.0 477.5,138.6 485.0,134.5 489.8,134.0 491.5,126.3 492.5,128.5 493.2,131.4 495.0,133.5 497.0,132.0 498.8,131.5 500.0,131.3 501.1,136.2 502.9,132.8 504.0,130.4 506.6,130.4 508.0,131.0 510.0,129.0 511.5,128.3 512.5,129.0 513.4,320.0 514.3,340.5 516.0,340.5 517.0,340.5 521.0,340.5 524.0,340.5 528.0,340.5 529.0,339.5 530.5,339.5 531.5,340.5 533.5,340.6 539.5,340.7 540.5,339.7 542.0,339.7 543.0,340.7 545.0,340.8 546.0,339.8 547.5,339.8 548.5,340.8 550.5,340.8 551.5,339.8 553.0,339.8 554.0,340.8 555.0,340.9 556.0,341.9 557.0,340.9 558.0,340.9 562.0,341.0 563.0,340.0 564.5,340.0 565.5,341.0 566.5,341.1 574.5,341.2 575.5,342.2 576.5,341.2 577.5,341.2 583.5,341.3 584.5,342.3 585.5,341.3 587.5,341.3 591.5,341.4 597.5,341.5 600.5,341.5 604.5,341.6 612.5,341.7 616.5,341.7 622.5,341.8 630.5,341.9 633.5,341.9 634.5,342.9 635.5,341.9 636.5,342.0 637.5,341.0 639.0,341.0 640.0,342.0 643.0,342.1 647.0,342.1 651.0,342.2 655.0,342.2 656.0,341.2 657.5,341.2 658.5,342.2 660.5,342.3 668.5,342.4 669.5,341.4 671.0,341.4 672.0,342.4 675.0,342.5 681.0,342.5 684.0,342.5 692.0,342.5 695.0,342.5 701.0,342.5 702.0,341.5 703.5,341.5 704.5,342.5 705.5,342.5 708.5,342.5 709.5,341.5 711.0,341.5 712.0,342.5 714.0,342.5 950.0,342.5" fill="none" stroke="#d09e38" stroke-width="1" stroke-linejoin="round"/><ellipse cx="489.6" cy="155.5" rx="122.9" ry="63.1" fill="none" stroke="#e8121c" stroke-width="3.1"/></svg>
<div class="t" style="right:979.5px;top:67.54px;font-size:6.8px;color:#4a4ae0;font-weight:normal;transform:scaleY(1.3);transform-origin:50% 84.65%;">10,2</div>
<div class="t" style="right:958.5px;top:67.54px;font-size:6.8px;color:#3caa5c;font-weight:normal;transform:scaleY(1.3);transform-origin:50% 84.65%;">3,333</div>
<div class="t" style="left:952px;top:67.54px;font-size:6.8px;color:#d4a840;font-weight:normal;transform:scaleY(1.3);transform-origin:50% 84.65%;">7,698</div>
<div class="t" style="left:974px;top:67.54px;font-size:6.8px;color:#f04868;font-weight:normal;transform:scaleY(1.3);transform-origin:50% 84.65%;">3,160</div>
<div class="t" style="right:979.5px;top:99.54px;font-size:6.8px;color:#4a4ae0;font-weight:normal;transform:scaleY(1.3);transform-origin:50% 84.65%;">-5,336</div>
<div class="t" style="right:958.5px;top:99.54px;font-size:6.8px;color:#3caa5c;font-weight:normal;transform:scaleY(1.3);transform-origin:50% 84.65%;">1,78</div>
<div class="t" style="left:952px;top:99.54px;font-size:6.8px;color:#d4a840;font-weight:normal;transform:scaleY(1.3);transform-origin:50% 84.65%;">6,727</div>
<div class="t" style="left:974px;top:99.54px;font-size:6.8px;color:#f04868;font-weight:normal;transform:scaleY(1.3);transform-origin:50% 84.65%;">-12,36</div>
<div class="t" style="right:979.5px;top:131.54px;font-size:6.8px;color:#4a4ae0;font-weight:normal;transform:scaleY(1.3);transform-origin:50% 84.65%;">-20,87</div>
<div class="t" style="right:958.5px;top:131.54px;font-size:6.8px;color:#3caa5c;font-weight:normal;transform:scaleY(1.3);transform-origin:50% 84.65%;">0,226</div>
<div class="t" style="left:952px;top:131.54px;font-size:6.8px;color:#d4a840;font-weight:normal;transform:scaleY(1.3);transform-origin:50% 84.65%;">5,757</div>
<div class="t" style="left:974px;top:131.54px;font-size:6.8px;color:#f04868;font-weight:normal;transform:scaleY(1.3);transform-origin:50% 84.65%;">-27,9</div>
<div class="t" style="right:979.5px;top:163.54px;font-size:6.8px;color:#4a4ae0;font-weight:normal;transform:scaleY(1.3);transform-origin:50% 84.65%;">-36,4</div>
<div class="t" style="right:958.5px;top:163.54px;font-size:6.8px;color:#3caa5c;font-weight:normal;transform:scaleY(1.3);transform-origin:50% 84.65%;">-1,327</div>
<div class="t" style="left:952px;top:163.54px;font-size:6.8px;color:#d4a840;font-weight:normal;transform:scaleY(1.3);transform-origin:50% 84.65%;">4,786</div>
<div class="t" style="left:974px;top:163.54px;font-size:6.8px;color:#f04868;font-weight:normal;transform:scaleY(1.3);transform-origin:50% 84.65%;">-43,43</div>
<div class="t" style="right:979.5px;top:195.54px;font-size:6.8px;color:#4a4ae0;font-weight:normal;transform:scaleY(1.3);transform-origin:50% 84.65%;">-51,93</div>
<div class="t" style="right:958.5px;top:195.54px;font-size:6.8px;color:#3caa5c;font-weight:normal;transform:scaleY(1.3);transform-origin:50% 84.65%;">-2,88</div>
<div class="t" style="left:952px;top:195.54px;font-size:6.8px;color:#d4a840;font-weight:normal;transform:scaleY(1.3);transform-origin:50% 84.65%;">3,815</div>
<div class="t" style="left:974px;top:195.54px;font-size:6.8px;color:#f04868;font-weight:normal;transform:scaleY(1.3);transform-origin:50% 84.65%;">-58,96</div>
<div class="t" style="right:979.5px;top:227.54px;font-size:6.8px;color:#4a4ae0;font-weight:normal;transform:scaleY(1.3);transform-origin:50% 84.65%;">-67,46</div>
<div class="t" style="right:958.5px;top:227.54px;font-size:6.8px;color:#3caa5c;font-weight:normal;transform:scaleY(1.3);transform-origin:50% 84.65%;">-4,433</div>
<div class="t" style="left:952px;top:227.54px;font-size:6.8px;color:#d4a840;font-weight:normal;transform:scaleY(1.3);transform-origin:50% 84.65%;">2,845</div>
<div class="t" style="left:974px;top:227.54px;font-size:6.8px;color:#f04868;font-weight:normal;transform:scaleY(1.3);transform-origin:50% 84.65%;">-74,49</div>
<div class="t" style="right:979.5px;top:259.54px;font-size:6.8px;color:#4a4ae0;font-weight:normal;transform:scaleY(1.3);transform-origin:50% 84.65%;">-82,99</div>
<div class="t" style="right:958.5px;top:259.54px;font-size:6.8px;color:#3caa5c;font-weight:normal;transform:scaleY(1.3);transform-origin:50% 84.65%;">-5,986</div>
<div class="t" style="left:952px;top:259.54px;font-size:6.8px;color:#d4a840;font-weight:normal;transform:scaleY(1.3);transform-origin:50% 84.65%;">1,874</div>
<div class="t" style="left:974px;top:259.54px;font-size:6.8px;color:#f04868;font-weight:normal;transform:scaleY(1.3);transform-origin:50% 84.65%;">-90,02</div>
<div class="t" style="right:979.5px;top:291.54px;font-size:6.8px;color:#4a4ae0;font-weight:normal;transform:scaleY(1.3);transform-origin:50% 84.65%;">-98,52</div>
<div class="t" style="right:958.5px;top:291.54px;font-size:6.8px;color:#3caa5c;font-weight:normal;transform:scaleY(1.3);transform-origin:50% 84.65%;">-7,539</div>
<div class="t" style="left:952px;top:291.54px;font-size:6.8px;color:#d4a840;font-weight:normal;transform:scaleY(1.3);transform-origin:50% 84.65%;">0,903</div>
<div class="t" style="left:974px;top:291.54px;font-size:6.8px;color:#f04868;font-weight:normal;transform:scaleY(1.3);transform-origin:50% 84.65%;">-105,5</div>
<div class="t" style="right:979.5px;top:323.54px;font-size:6.8px;color:#4a4ae0;font-weight:normal;transform:scaleY(1.3);transform-origin:50% 84.65%;">-114,1</div>
<div class="t" style="right:958.5px;top:323.54px;font-size:6.8px;color:#3caa5c;font-weight:normal;transform:scaleY(1.3);transform-origin:50% 84.65%;">-9,092</div>
<div class="t" style="left:952px;top:323.54px;font-size:6.8px;color:#d4a840;font-weight:normal;transform:scaleY(1.3);transform-origin:50% 84.65%;">-0,067</div>
<div class="t" style="left:974px;top:323.54px;font-size:6.8px;color:#f04868;font-weight:normal;transform:scaleY(1.3);transform-origin:50% 84.65%;">-121,1</div>
<div class="t" style="right:979.5px;top:355.54px;font-size:6.8px;color:#4a4ae0;font-weight:normal;transform:scaleY(1.3);transform-origin:50% 84.65%;">-129,6</div>
<div class="t" style="right:958.5px;top:355.54px;font-size:6.8px;color:#3caa5c;font-weight:normal;transform:scaleY(1.3);transform-origin:50% 84.65%;">-10,65</div>
<div class="t" style="left:952px;top:355.54px;font-size:6.8px;color:#d4a840;font-weight:normal;transform:scaleY(1.3);transform-origin:50% 84.65%;">-1,038</div>
<div class="t" style="left:974px;top:355.54px;font-size:6.8px;color:#f04868;font-weight:normal;transform:scaleY(1.3);transform-origin:50% 84.65%;">-136,6</div>
<div class="t" style="right:979.5px;top:387.54px;font-size:6.8px;color:#4a4ae0;font-weight:normal;transform:scaleY(1.3);transform-origin:50% 84.65%;">-145,1</div>
<div class="t" style="right:958.5px;top:387.54px;font-size:6.8px;color:#3caa5c;font-weight:normal;transform:scaleY(1.3);transform-origin:50% 84.65%;">-12,2</div>
<div class="t" style="left:952px;top:387.54px;font-size:6.8px;color:#d4a840;font-weight:normal;transform:scaleY(1.3);transform-origin:50% 84.65%;">-2,009</div>
<div class="t" style="left:974px;top:387.54px;font-size:6.8px;color:#f04868;font-weight:normal;transform:scaleY(1.3);transform-origin:50% 84.65%;">-152,1</div>
<div class="t" style="right:980.5px;top:77.24px;font-size:6.8px;color:#4a4ae0;font-weight:normal;transform:scaleY(1.25);transform-origin:50% 84.65%;">V</div>
<div class="t" style="right:958.5px;top:77.24px;font-size:6.8px;color:#3caa5c;font-weight:normal;transform:scaleY(1.25);transform-origin:50% 84.65%;">V</div>
<div class="t" style="left:952px;top:77.24px;font-size:6.8px;color:#d4a840;font-weight:normal;transform:scaleY(1.25);transform-origin:50% 84.65%;">A</div>
<div class="t" style="left:975px;top:77.24px;font-size:6.8px;color:#f04868;font-weight:normal;transform:scaleY(1.25);transform-origin:50% 84.65%;">V</div>
<div style="position:absolute;left:3px;top:91px;width:11px;height:1px;background:#b8b8f0"></div>
<div style="position:absolute;left:25px;top:138px;width:11px;height:1px;background:#b0e0c0"></div>
<div style="position:absolute;left:978px;top:76px;width:11px;height:1px;background:#f0a0a8"></div>
<div style="position:absolute;left:0px;top:68px;width:3.5px;height:5px;background:#1020f0"></div>
<div style="position:absolute;left:20px;top:68px;width:5px;height:5px;background:#108a30;border:0.5px solid #111;box-sizing:border-box"></div>
<div style="position:absolute;left:968px;top:68px;width:5px;height:5px;background:#c8a020;border:0.5px solid #111;box-sizing:border-box"></div>
<div style="position:absolute;left:990px;top:68px;width:5px;height:5px;background:#e01020;border:0.5px solid #111;box-sizing:border-box"></div>
<div style="position:absolute;left:39px;top:387px;width:5px;height:5px;border:1px solid #111;box-sizing:border-box;background:#fff"></div>
<div style="position:absolute;left:947px;top:386.8px;width:7px;height:7px;background:#0c7a78;border:0.8px solid #111;box-sizing:border-box;border-radius:50%"></div>
<div class="t" style="left:-58.3px;width:200px;text-align:center;top:395.71px;font-size:6.6px;color:#262630;font-weight:normal;transform:scaleY(1.25);transform-origin:50% 84.65%;">658,0</div>
<div class="t" style="left:32.69999999999999px;width:200px;text-align:center;top:395.71px;font-size:6.6px;color:#262630;font-weight:normal;transform:scaleY(1.25);transform-origin:50% 84.65%;">659,6</div>
<div class="t" style="left:122.69999999999999px;width:200px;text-align:center;top:395.71px;font-size:6.6px;color:#262630;font-weight:normal;transform:scaleY(1.25);transform-origin:50% 84.65%;">661,3</div>
<div class="t" style="left:214.7px;width:200px;text-align:center;top:395.71px;font-size:6.6px;color:#262630;font-weight:normal;transform:scaleY(1.25);transform-origin:50% 84.65%;">663,0</div>
<div class="t" style="left:305.7px;width:200px;text-align:center;top:395.71px;font-size:6.6px;color:#262630;font-weight:normal;transform:scaleY(1.25);transform-origin:50% 84.65%;">664,7</div>
<div class="t" style="left:395.7px;width:200px;text-align:center;top:395.71px;font-size:6.6px;color:#262630;font-weight:normal;transform:scaleY(1.25);transform-origin:50% 84.65%;">666,3</div>
<div class="t" style="left:487.70000000000005px;width:200px;text-align:center;top:395.71px;font-size:6.6px;color:#262630;font-weight:normal;transform:scaleY(1.25);transform-origin:50% 84.65%;">668,0</div>
<div class="t" style="left:577.7px;width:200px;text-align:center;top:395.71px;font-size:6.6px;color:#262630;font-weight:normal;transform:scaleY(1.25);transform-origin:50% 84.65%;">669,7</div>
<div class="t" style="left:669.7px;width:200px;text-align:center;top:395.71px;font-size:6.6px;color:#262630;font-weight:normal;transform:scaleY(1.25);transform-origin:50% 84.65%;">671,4</div>
<div class="t" style="left:759.7px;width:200px;text-align:center;top:395.71px;font-size:6.6px;color:#262630;font-weight:normal;transform:scaleY(1.25);transform-origin:50% 84.65%;">673,0</div>
<div class="t" style="left:850.7px;width:200px;text-align:center;top:395.71px;font-size:6.6px;color:#262630;font-weight:normal;transform:scaleY(1.25);transform-origin:50% 84.65%;">674,7</div>
<div class="t" style="left:647px;top:156.06px;font-size:12.8px;color:#e8121c;font-weight:bold;letter-spacing:0.03px;transform:scaleY(1.07);transform-origin:50% 84.65%;">last coil load process</div>
<div class="t" style="left:647px;top:174.41px;font-size:12.8px;color:#e8121c;font-weight:bold;letter-spacing:0.15px;transform:scaleY(1.07);transform-origin:50% 84.65%;">stops loading before</div>
<div class="t" style="left:647px;top:192.76px;font-size:12.8px;color:#e8121c;font-weight:bold;letter-spacing:0.17px;transform:scaleY(1.07);transform-origin:50% 84.65%;">reaching top - after this</div>
<div class="t" style="left:647px;top:211.11px;font-size:12.8px;color:#e8121c;font-weight:bold;letter-spacing:0.26px;transform:scaleY(1.07);transform-origin:50% 84.65%;">no more ignition</div>
<div style="position:absolute;left:405px;top:64px;width:181px;height:21px;background:#a0a0a0"></div>
<div style="position:absolute;left:405px;top:64px;width:181px;height:1px;background:#bcbcbc"></div>
<div style="position:absolute;left:405px;top:64px;width:1px;height:21px;background:#c4c4c4"></div>
<div style="position:absolute;left:415px;top:75px;width:56px;height:9px;background:#fff"></div>
<div style="position:absolute;left:472px;top:75px;width:55px;height:9px;background:#fff"></div>
<div style="position:absolute;left:528px;top:75px;width:55px;height:9px;background:#fff"></div>
<div style="position:absolute;left:471px;top:65px;width:1px;height:19px;background:#d8d8d8"></div>
<div style="position:absolute;left:527px;top:65px;width:1px;height:19px;background:#d8d8d8"></div>
<div style="position:absolute;left:583px;top:65px;width:3px;height:20px;background:#b4b4b4"></div>
<div style="position:absolute;left:405px;top:84px;width:181px;height:1px;background:#c4c4c4"></div>
<div style="position:absolute;left:409px;top:78px;width:4px;height:3.5px;background:#c8a020;border:0.5px solid #111;box-sizing:border-box"></div>
<div class="t" style="left:419px;top:67.50px;font-size:6.5px;color:#d8d8e8;font-weight:normal;">1</div>
<div class="t" style="left:474.5px;top:67.50px;font-size:6.5px;color:#d8d8e8;font-weight:normal;">2</div>
<div class="t" style="left:531px;top:67.50px;font-size:6.5px;color:#d8d8e8;font-weight:normal;">Δ</div>
<div class="t" style="left:417px;top:76.84px;font-size:6.8px;color:#3a2a3a;font-weight:normal;">6,318 A</div>
<div class="t" style="left:474px;top:76.84px;font-size:6.8px;color:#3a2a3a;font-weight:normal;">--,--</div>
<div class="t" style="left:530px;top:76.84px;font-size:6.8px;color:#3a2a3a;font-weight:normal;">--,--</div>
<div style="position:absolute;left:568px;top:71px;width:4px;height:1.5px;background:#fff"></div>
<svg style="position:absolute;left:577.5px;top:65.5px" width="7" height="7" viewBox="0 0 7 7"><path d="M1 1L6 6M6 1L1 6" stroke="#fff" stroke-width="1.1"/></svg>
<div style="position:absolute;left:717px;top:298px;width:248px;height:57px;background:#a4a4a4"></div>
<div style="position:absolute;left:720px;top:308px;width:243px;height:45px;background:#fff"></div>
<div style="position:absolute;left:963px;top:308px;width:2px;height:47px;background:#bcbcbc"></div>
<div style="position:absolute;left:720px;top:353px;width:245px;height:2px;background:#e2e2e2"></div>
<div class="t" style="left:721px;top:301.10px;font-size:6.5px;color:#fafafa;font-weight:bold;">Zoom Overview</div>
<div style="position:absolute;left:948px;top:305px;width:4px;height:1.5px;background:#fff"></div>
<svg style="position:absolute;left:956px;top:300px" width="8" height="8" viewBox="0 0 8 8"><path d="M1.8 1.4L6.3 6.2M6.3 1.4L1.8 6.2" stroke="#fff" stroke-width="1.1"/></svg>
<svg style="position:absolute;left:0;top:0" width="999" height="436" viewBox="0 0 999 436"><g stroke="#b4dcee" stroke-width="0.9" stroke-dasharray="1.6 1.4" fill="none"><path d="M724 314.5 H958"/><path d="M724 318.5 H958"/><path d="M724 322.5 H958"/><path d="M724 326.5 H958"/><path d="M724 330.5 H958"/><path d="M724 334.5 H958"/><path d="M724 338.5 H958"/><path d="M724 342.5 H958"/><path d="M724 348.5 H958"/><path d="M724 352.5 H958"/><path d="M724.5 313 V353"/><path d="M747.5 313 V353"/><path d="M770.5 313 V353"/><path d="M793.5 313 V353"/><path d="M817.5 313 V353"/><path d="M840.5 313 V353"/><path d="M864.5 313 V353"/><path d="M888.5 313 V353"/><path d="M910.5 313 V353"/><path d="M933.5 313 V353"/><path d="M957.5 313 V353"/></g><rect x="725" y="336" width="159.5" height="10.5" fill="#c49a22"/><rect x="725" y="326.2" width="173" height="8.2" fill="#1a1ae8"/><rect x="724.8" y="326.2" width="3.6" height="6.8" fill="#7a1aa8"/><rect x="725.5" y="326.2" width="2.2" height="6.8" fill="#e8203a"/><rect x="728.8" y="326.2" width="3.2" height="6.8" fill="#7a1aa8"/><rect x="729.5" y="326.2" width="1.8" height="6.8" fill="#e8203a"/><rect x="732.8" y="326.2" width="3.2" height="6.8" fill="#7a1aa8"/><rect x="733.5" y="326.2" width="1.8" height="6.8" fill="#e8203a"/><rect x="736.0" y="326.2" width="3.9" height="6.8" fill="#7a1aa8"/><rect x="736.7" y="326.2" width="2.5" height="6.8" fill="#e8203a"/><rect x="740.7" y="326.2" width="3.6" height="6.8" fill="#7a1aa8"/><rect x="741.4" y="326.2" width="2.2" height="6.8" fill="#e8203a"/><rect x="744.7" y="326.2" width="3.2" height="6.8" fill="#7a1aa8"/><rect x="745.4" y="326.2" width="1.8" height="6.8" fill="#e8203a"/><rect x="749.4" y="326.2" width="1.3" height="6.8" fill="#fff"/><rect x="751.2" y="326.2" width="3.2" height="6.8" fill="#7a1aa8"/><rect x="751.9" y="326.2" width="1.8" height="6.8" fill="#e8203a"/><rect x="754.4" y="326.2" width="3.6" height="6.8" fill="#7a1aa8"/><rect x="755.1" y="326.2" width="2.2" height="6.8" fill="#e8203a"/><rect x="758.4" y="326.2" width="3.2" height="6.8" fill="#7a1aa8"/><rect x="759.1" y="326.2" width="1.8" height="6.8" fill="#e8203a"/><rect x="762.4" y="326.2" width="3.2" height="6.8" fill="#7a1aa8"/><rect x="763.1" y="326.2" width="1.8" height="6.8" fill="#e8203a"/><rect x="766.0" y="326.2" width="3.9" height="6.8" fill="#7a1aa8"/><rect x="766.7" y="326.2" width="2.5" height="6.8" fill="#e8203a"/><rect x="769.9" y="326.2" width="3.2" height="6.8" fill="#7a1aa8"/><rect x="770.6" y="326.2" width="1.8" height="6.8" fill="#e8203a"/><rect x="773.9" y="326.2" width="3.2" height="6.8" fill="#7a1aa8"/><rect x="774.6" y="326.2" width="1.8" height="6.8" fill="#e8203a"/><rect x="777.5" y="326.2" width="3.2" height="6.8" fill="#7a1aa8"/><rect x="778.2" y="326.2" width="1.8" height="6.8" fill="#e8203a"/><rect x="780.7" y="326.2" width="3.2" height="6.8" fill="#7a1aa8"/><rect x="781.4" y="326.2" width="1.8" height="6.8" fill="#e8203a"/><rect x="783.9" y="326.2" width="3.6" height="6.8" fill="#7a1aa8"/><rect x="784.6" y="326.2" width="2.2" height="6.8" fill="#e8203a"/><rect x="788.6" y="326.2" width="1.3" height="6.8" fill="#fff"/><rect x="792.4" y="326.2" width="3.2" height="6.8" fill="#7a1aa8"/><rect x="793.1" y="326.2" width="1.8" height="6.8" fill="#e8203a"/><rect x="796.0" y="326.2" width="3.2" height="6.8" fill="#7a1aa8"/><rect x="796.7" y="326.2" width="1.8" height="6.8" fill="#e8203a"/><rect x="800.0" y="326.2" width="3.6" height="6.8" fill="#7a1aa8"/><rect x="800.7" y="326.2" width="2.2" height="6.8" fill="#e8203a"/><rect x="803.6" y="326.2" width="3.9" height="6.8" fill="#7a1aa8"/><rect x="804.3" y="326.2" width="2.5" height="6.8" fill="#e8203a"/><rect x="809.5" y="326.2" width="3.6" height="6.8" fill="#7a1aa8"/><rect x="810.2" y="326.2" width="2.2" height="6.8" fill="#e8203a"/><rect x="813.8" y="326.2" width="1.3" height="6.8" fill="#fff"/><rect x="822.1" y="326.2" width="3.2" height="6.8" fill="#7a1aa8"/><rect x="822.8" y="326.2" width="1.8" height="6.8" fill="#e8203a"/><rect x="825.3" y="326.2" width="3.9" height="6.8" fill="#7a1aa8"/><rect x="826.0" y="326.2" width="2.5" height="6.8" fill="#e8203a"/><rect x="829.6" y="326.2" width="3.2" height="6.8" fill="#7a1aa8"/><rect x="830.3" y="326.2" width="1.8" height="6.8" fill="#e8203a"/><rect x="832.8" y="326.2" width="3.2" height="6.8" fill="#7a1aa8"/><rect x="833.5" y="326.2" width="1.8" height="6.8" fill="#e8203a"/><rect x="836.8" y="326.2" width="3.2" height="6.8" fill="#7a1aa8"/><rect x="837.5" y="326.2" width="1.8" height="6.8" fill="#e8203a"/><rect x="840.8" y="326.2" width="3.6" height="6.8" fill="#7a1aa8"/><rect x="841.5" y="326.2" width="2.2" height="6.8" fill="#e8203a"/><rect x="844.4" y="326.2" width="3.2" height="6.8" fill="#7a1aa8"/><rect x="845.1" y="326.2" width="1.8" height="6.8" fill="#e8203a"/><rect x="848.4" y="326.2" width="3.9" height="6.8" fill="#7a1aa8"/><rect x="849.1" y="326.2" width="2.5" height="6.8" fill="#e8203a"/><rect x="853.1" y="326.2" width="2.6" height="6.8" fill="#7a1aa8"/><rect x="853.8" y="326.2" width="1.2" height="6.8" fill="#e8203a"/><rect x="856.1" y="326.2" width="2.2" height="6.8" fill="#7a1aa8"/><rect x="856.8" y="326.2" width="0.8" height="6.8" fill="#e8203a"/><rect x="859.0" y="326.2" width="1.3" height="6.8" fill="#fff"/><rect x="860.8" y="326.2" width="3.0" height="6.8" fill="#7a1aa8"/><rect x="861.5" y="326.2" width="1.6" height="6.8" fill="#e8203a"/><rect x="869.2" y="326.2" width="2.6" height="6.8" fill="#7a1aa8"/><rect x="869.9" y="326.2" width="1.2" height="6.8" fill="#e8203a"/><rect x="875.6" y="326.2" width="2.6" height="6.8" fill="#7a1aa8"/><rect x="876.3" y="326.2" width="1.2" height="6.8" fill="#e8203a"/><rect x="878.6" y="326.2" width="2.6" height="6.8" fill="#7a1aa8"/><rect x="879.3" y="326.2" width="1.2" height="6.8" fill="#e8203a"/><rect x="889.1" y="326.2" width="2.6" height="6.8" fill="#7a1aa8"/><rect x="889.8" y="326.2" width="1.2" height="6.8" fill="#e8203a"/><rect x="892.4" y="326.2" width="1.3" height="6.8" fill="#fff"/><rect x="725" y="333" width="233" height="1.5" fill="#1a1ae8"/><rect x="902" y="325" width="0.8" height="7" fill="#e02040"/><rect x="725" y="334.6" width="159.5" height="2.4" fill="#48a844"/><rect x="884.5" y="335.5" width="73.5" height="1.1" fill="#70c8a0"/><rect x="725.0" y="335" width="0.9" height="3.5" fill="#2a9a3a"/><rect x="729.0" y="335" width="0.9" height="3" fill="#2a9a3a"/><rect x="731.0" y="335" width="0.9" height="2.5" fill="#2a9a3a"/><rect x="737.0" y="335" width="0.9" height="3.5" fill="#2a9a3a"/><rect x="739.0" y="335" width="0.9" height="3" fill="#2a9a3a"/><rect x="743.0" y="335" width="0.9" height="3.5" fill="#2a9a3a"/><rect x="745.0" y="335" width="0.9" height="4.5" fill="#2a9a3a"/><rect x="747.0" y="335" width="0.9" height="4.5" fill="#2a9a3a"/><rect x="749.0" y="335" width="0.9" height="4.5" fill="#2a9a3a"/><rect x="751.0" y="335" width="0.9" height="4.5" fill="#2a9a3a"/><rect x="757.0" y="335" width="0.9" height="2.5" fill="#2a9a3a"/><rect x="759.0" y="335" width="0.9" height="2.5" fill="#2a9a3a"/><rect x="761.0" y="335" width="0.9" height="2.5" fill="#2a9a3a"/><rect x="765.0" y="335" width="0.9" height="4.5" fill="#2a9a3a"/><rect x="769.0" y="335" width="0.9" height="4.5" fill="#2a9a3a"/><rect x="775.0" y="335" width="0.9" height="4.5" fill="#2a9a3a"/><rect x="781.0" y="335" width="0.9" height="2.5" fill="#2a9a3a"/><rect x="783.0" y="335" width="0.9" height="3.5" fill="#2a9a3a"/><rect x="785.0" y="335" width="0.9" height="4.5" fill="#2a9a3a"/><rect x="787.0" y="335" width="0.9" height="3" fill="#2a9a3a"/><rect x="789.0" y="335" width="0.9" height="4.5" fill="#2a9a3a"/><rect x="795.0" y="335" width="0.9" height="3.5" fill="#2a9a3a"/><rect x="797.0" y="335" width="0.9" height="3.5" fill="#2a9a3a"/><rect x="801.0" y="335" width="0.9" height="3" fill="#2a9a3a"/><rect x="804.0" y="335" width="0.9" height="3" fill="#2a9a3a"/><rect x="808.0" y="335" width="0.9" height="4.5" fill="#2a9a3a"/><rect x="814.0" y="335" width="0.9" height="3" fill="#2a9a3a"/><rect x="818.0" y="335" width="0.9" height="4.5" fill="#2a9a3a"/><rect x="822.0" y="335" width="0.9" height="3" fill="#2a9a3a"/><rect x="828.0" y="335" width="0.9" height="3" fill="#2a9a3a"/><rect x="831.0" y="335" width="0.9" height="4.5" fill="#2a9a3a"/><rect x="834.0" y="335" width="0.9" height="3.5" fill="#2a9a3a"/><rect x="837.0" y="335" width="0.9" height="3" fill="#2a9a3a"/><rect x="840.0" y="335" width="0.9" height="4.5" fill="#2a9a3a"/><rect x="844.0" y="335" width="0.9" height="2.5" fill="#2a9a3a"/><rect x="846.0" y="335" width="0.9" height="3.5" fill="#2a9a3a"/><rect x="849.0" y="335" width="0.9" height="2.5" fill="#2a9a3a"/><rect x="855.0" y="335" width="0.9" height="4.5" fill="#2a9a3a"/><rect x="859.0" y="335" width="0.9" height="3" fill="#2a9a3a"/><rect x="865.0" y="335" width="0.9" height="4.5" fill="#2a9a3a"/><rect x="871.0" y="335" width="0.9" height="3.5" fill="#2a9a3a"/><rect x="877.0" y="335" width="0.9" height="3.5" fill="#2a9a3a"/><rect x="879.0" y="335" width="0.9" height="2.5" fill="#2a9a3a"/><rect x="883.0" y="335" width="0.9" height="2.5" fill="#2a9a3a"/><rect x="884.5" y="346" width="73.5" height="1" fill="#c49a22"/><rect x="884" y="336" width="0.8" height="12" fill="#707070"/></svg>
<div style="position:absolute;left:994px;top:64px;width:5px;height:349px;background:#f3efe7;border-left:1px solid #d8d0c2;box-sizing:border-box"></div>
<div style="position:absolute;left:994px;top:237px;width:5px;height:167px;background:linear-gradient(90deg,#f4f0e8,#e6dfd0);border-top:1px solid #8a7a6a;border-left:1px solid #c4b8a8;box-sizing:border-box"></div>
<div style="position:absolute;left:994px;top:64px;width:5px;height:9px;background:linear-gradient(#f8f6f0,#e6e0d2);border-left:1px solid #b8aa98;border-bottom:1px solid #8a7a6a;box-sizing:border-box"></div>
<div style="position:absolute;left:994px;top:404px;width:5px;height:9px;background:linear-gradient(#f8f6f0,#e6e0d2);border-left:1px solid #b8aa98;border-top:1px solid #8a7a6a;box-sizing:border-box"></div>
<svg style="position:absolute;left:994px;top:64px" width="5" height="349" viewBox="0 0 5 349"><path d="M1.8 5.5 L3.3 4 L5 5.5" stroke="#555" stroke-width="0.8" fill="none"/><path d="M1.8 343.5 L3.3 345 L5 343.5" stroke="#555" stroke-width="0.8" fill="none"/></svg>
<div style="position:absolute;left:0px;top:405px;width:19px;height:7px;background:#7b7bf0"></div>
<div class="t" style="left:-90.5px;width:200px;text-align:center;top:405.92px;font-size:6px;color:#c8c8ff;font-weight:normal;">x1,0</div>
<div style="position:absolute;left:20px;top:405px;width:20px;height:7px;background:#6ccf9a"></div>
<div class="t" style="left:-70px;width:200px;text-align:center;top:405.92px;font-size:6px;color:#c8f0d8;font-weight:normal;">x1,0</div>
<div class="t" style="left:43px;top:405.57px;font-size:7px;color:#222;font-weight:normal;">ms</div>
<div class="t" style="left:60px;top:405.57px;font-size:7px;color:#222;font-weight:normal;">+13,0s</div>
<div style="position:absolute;left:951.5px;top:405px;width:19.5px;height:7px;background:#dcc890"></div>
<div class="t" style="left:860.5px;width:200px;text-align:center;top:405.92px;font-size:6px;color:#f4ecd0;font-weight:normal;">x1,0</div>
<div style="position:absolute;left:973px;top:405px;width:20px;height:7px;background:#f29aa4"></div>
<div class="t" style="left:883px;width:200px;text-align:center;top:405.92px;font-size:6px;color:#fde0e4;font-weight:normal;">x1,0</div>
<div style="position:absolute;left:0px;top:413px;width:999px;height:9px;background:linear-gradient(#f2efe8,#e8e2d4)"></div>
<div style="position:absolute;left:0px;top:413px;width:7px;height:9px;background:linear-gradient(#f8f6f0,#e4ddd0);border:1px solid #8e7e6e;border-left:none;box-sizing:border-box;border-radius:0 1px 1px 0"></div>
<svg style="position:absolute;left:0;top:413px" width="7" height="9" viewBox="0 0 7 9"><path d="M4.5 2 L2 4.5 L4.5 7" stroke="#333" stroke-width="0.8" fill="none"/></svg>
<div style="position:absolute;left:985px;top:413px;width:9px;height:9px;background:linear-gradient(#f8f6f0,#e4ddd0);border:1px solid #9a8a78;border-top-color:#c8bcac;border-left-color:#c8bcac;box-sizing:border-box"></div>
<svg style="position:absolute;left:985px;top:413px" width="9" height="9" viewBox="0 0 9 9"><path d="M3.5 2.2 L5.8 4.5 L3.5 6.8" stroke="#444" stroke-width="0.8" fill="none"/></svg>
<div style="position:absolute;left:994px;top:413px;width:5px;height:9px;background:#fff"></div>
<div style="position:absolute;left:669px;top:413px;width:8px;height:9px;background:linear-gradient(90deg,#fbfaf6,#efe9de);border:1px solid #9a8070;border-radius:1.5px;box-sizing:border-box"></div>
<div style="position:absolute;left:671px;top:416px;width:1px;height:3px;background:#a89888"></div>
<div style="position:absolute;left:0px;top:422px;width:999px;height:1px;background:#000"></div>
<div style="position:absolute;left:0px;top:423px;width:999px;height:10px;background:#43577a"></div>
<div class="t" style="left:1px;top:425.84px;font-size:6.1px;color:#f8f8f8;font-weight:bold;transform:scaleY(1.1);transform-origin:50% 84.65%;">Kanaal Labels</div>
<div style="position:absolute;left:0px;top:433px;width:999px;height:3px;background:#fbfaf8"></div>
<div style="position:absolute;left:10px;top:433px;width:1px;height:3px;background:#888"></div>
<div style="position:absolute;left:291px;top:434px;width:14px;height:3px;border:1px solid #c0b4a6;border-bottom:none;border-radius:2px 2px 0 0;box-sizing:border-box;background:#fff"></div>
<svg style="position:absolute;left:980px;top:423px" width="19" height="10" viewBox="0 0 19 10"><rect x="2.3" y="2" width="4" height="2.6" fill="none" stroke="#fff" stroke-width="0.9"/><path d="M1.5 4.8h5.6M4.3 4.8v3.4" stroke="#fff" stroke-width="1"/><path d="M9 6.6h4" stroke="#fff" stroke-width="1.4"/><path d="M16 2.5L19.5 6M19.5 2.5L16 6" stroke="#fff" stroke-width="1"/></svg>
</body></html>
